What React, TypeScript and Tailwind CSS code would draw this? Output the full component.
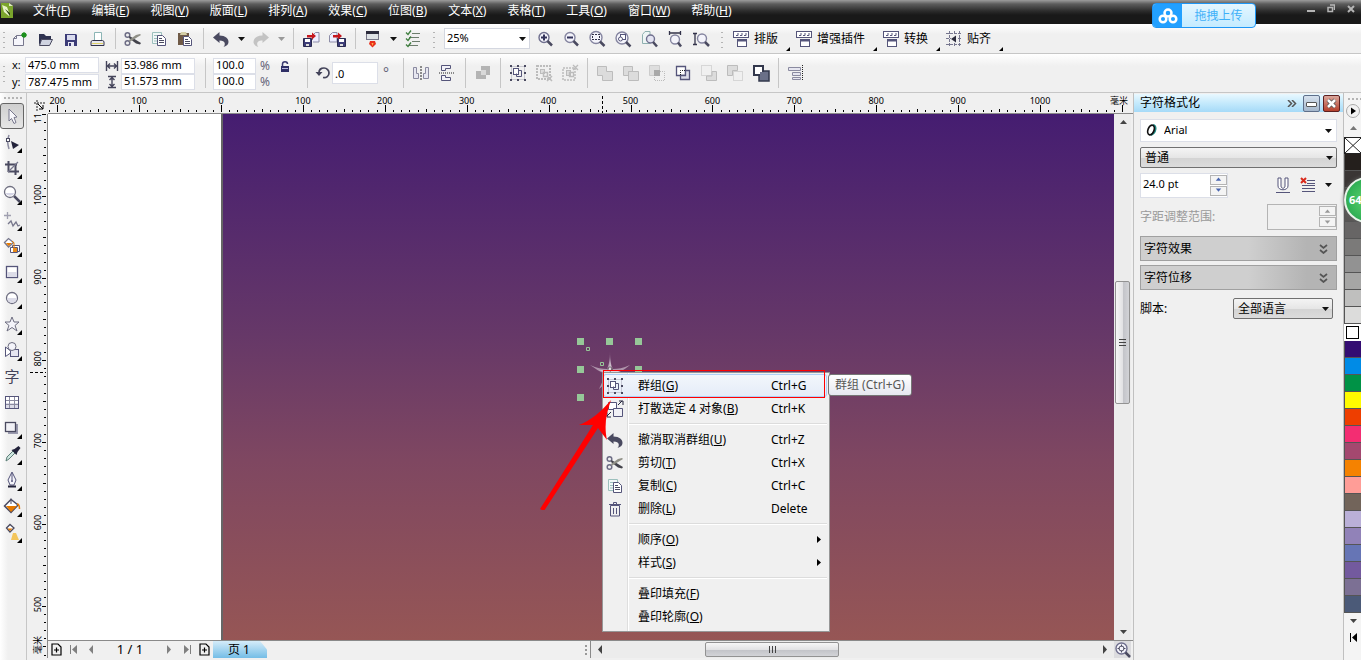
import { useState } from "react";
import type { ReactNode } from "react";

const INK = "#55557a";
const DARK = "#4a4a60";
const OFF = "#bcbcbc";

// every icon is drawn on an 18x18 grid
const ICONS: Record<string, ReactNode> = {
  create: (
    <>
      <path d="M3.5 8.5L6.5 5.5H13.5V15.5H3.5Z" fill="#f6f6fb" stroke="#77778c" />
      <path d="M3.5 8.5H6.5V5.5" fill="none" stroke="#77778c" />
      <circle cx="14" cy="5" r="2.500" fill="#1d8f1d" />
      <path d="M14 2v6M11 5h6M12 3l4 4M16 3l-4 4" stroke="#1d8f1d" strokeWidth="0.800" />
    </>
  ),
  open: (
    <>
      <path d="M3 15V4h5l2 2h5v4H6z" fill="#2f3350" />
      <path d="M5.5 9.5h11l-3 6h-10z" fill="#cfd3e0" stroke={DARK} />
    </>
  ),
  save: (
    <>
      <path d="M3 4h11l1 1v11H3z" fill="#3d3d78" />
      <rect x="5" y="5" width="8" height="5" fill="#d9dbee" />
      <rect x="6" y="12" width="6" height="4" fill="#e9e9f4" />
      <rect x="7" y="13" width="2" height="3" fill="#3d3d78" />
    </>
  ),
  print: (
    <>
      <path d="M6.500 10V2.500h7V10" fill="#fff" stroke="#8bb5b5" />
      <path d="M4.500 10.500h10l1.500 1v4h-13v-4z" fill="#e8e8ee" stroke="#33334a" />
      <path d="M4 13.500h11" stroke="#e0d36a" />
    </>
  ),
  cut: (
    <>
      <circle cx="3.500" cy="5" r="2.300" fill="none" stroke="#6d6d85" strokeWidth="1.500" />
      <circle cx="3.500" cy="13" r="2.300" fill="none" stroke="#6d6d85" strokeWidth="1.500" />
      <path d="M5.500 6L17 13l-1 1.500-4-1L5 8z" fill="#44444c" />
      <path d="M5.500 12L17 5l-1-1-4 1-7 5z" fill="#8f8f86" />
    </>
  ),
  copy: (
    <>
      <path d="M2.500 2.500h9v11h-9z" fill="#f2f7f7" stroke="#9cc0bd" />
      <path d="M4 5.500h5M4 8.500h4M4 11h4" stroke="#9cc0bd" />
      <path d="M7.500 5.500h5l3 3v7h-8z" fill="#fff" stroke={INK} />
      <path d="M9 8.500h3M9 10.500h5M9 12.500h5" stroke={DARK} />
    </>
  ),
  paste: (
    <>
      <rect x="2" y="3" width="11" height="12" fill="#6f5a47" />
      <path d="M4 5l1-3h5l1 3z" fill="#d5cfa8" />
      <path d="M7.500 6.500h5l3 3v6h-8z" fill="#fff" stroke={INK} />
      <path d="M9 9.500h3M9 11.500h5M9 13.500h5" stroke={DARK} />
    </>
  ),
  undo: <path d="M1 7.500L7.500 2v3.500c6 0 9 3 9 6.500 0 2-1.500 4-5 5 2-2 2.500-6.500-4-6.500V13z" fill={DARK} />,
  redo: <path d="M17 7.500L10.500 2v3.500c-6 0-9 3-9 6.500 0 2 1.500 4 5 5-2-2-2.500-6.500 4-6.500V13z" fill="#c3c3c3" />,
  importFile: (
    <>
      <path d="M10.500 10V5.500l3-3h3.500V12h-6" fill="#eef" stroke="#8d8da8" />
      <path d="M1.500 8.500h8v8h-8z" fill="#3d3d78" stroke="#2a2a50" />
      <rect x="3" y="9" width="5" height="3" fill="#fff" />
      <rect x="4" y="14" width="3" height="2" fill="#ddd" />
      <path d="M5 7.500V5h5V2.500L14 6l-4 3.500V7.500z" fill="#c5161d" />
    </>
  ),
  exportFile: (
    <>
      <path d="M1.500 12V5.500l3-3H9V12z" fill="#eef" stroke="#8d8da8" />
      <path d="M9.500 8.500h8v8h-8z" fill="#3d3d78" stroke="#2a2a50" />
      <rect x="11" y="9" width="5" height="3" fill="#fff" />
      <rect x="12" y="14" width="3" height="2" fill="#ddd" />
      <path d="M5 7.500V5h5V2.500L14 6l-4 3.500V7.500z" fill="#c5161d" />
    </>
  ),
  launch: (
    <>
      <rect x="2.500" y="1.500" width="12" height="8" fill="#dfe3e6" stroke="#777788" />
      <rect x="2" y="1" width="13" height="3" fill="#2c2c3c" />
      <path d="M6 11h5l1 3-3.500 3.500L5 14z" fill="#e8301c" />
      <path d="M7.500 13h2l-1 3z" fill="#ffb14a" />
    </>
  ),
  options: (
    <>
      <path d="M8 3.500h8M5 7.500h10M8 11.500h8M5 15.500h9" stroke="#6d7d6d" />
      <path d="M2 2.500l2 2 3-4M2 8.500l2 2 3-4M2 14.500l2 2 3-4" fill="none" stroke="#3f7f3f" strokeWidth="1.300" />
    </>
  ),
  zoomIn: (
    <>
      <circle cx="8" cy="7.500" r="5" fill="#f4f4fb" stroke="#6f6f8e" strokeWidth="1.400" />
      <path d="M5 7.500h6M8 4.500v6" stroke="#33335a" strokeWidth="2" />
      <path d="M11.500 11l4.500 4.500" stroke={DARK} strokeWidth="2.500" />
    </>
  ),
  zoomOut: (
    <>
      <circle cx="8" cy="7.500" r="5" fill="#f4f4fb" stroke="#8585a0" strokeWidth="1.400" />
      <path d="M5 7.500h6" stroke="#33335a" strokeWidth="2" />
      <path d="M11.500 11l4.500 4.500" stroke={DARK} strokeWidth="2.500" />
    </>
  ),
  zoomSelected: (
    <>
      <circle cx="8" cy="7.500" r="6" fill="#f4f4fb" stroke="#8585a0" strokeWidth="1.400" />
      <path d="M4 4h2v1H4zM7 4h2v1H7zM10 4h2v1h-2zM4 9h2v1H4zM7 9h2v1H7zM10 9h2v1h-2zM4 6h1v2H4zM11 6h1v2h-1z" fill="#33334a" />
      <path d="M12 11.500l4.500 4.500" stroke={DARK} strokeWidth="2.500" />
    </>
  ),
  zoomAll: (
    <>
      <circle cx="8" cy="8" r="6" fill="#f4f4fb" stroke="#8585a0" strokeWidth="1.400" />
      <rect x="6.500" y="4.500" width="5" height="5" fill="#fff" stroke={INK} />
      <circle cx="6.500" cy="9" r="2" fill="#fff" stroke={INK} />
      <path d="M12 12l4.500 4.500" stroke={DARK} strokeWidth="2.500" />
    </>
  ),
  navigator: (
    <>
      <circle cx="7.500" cy="7.500" r="5.500" fill="#f4f4fb" stroke="#6f6f8e" strokeWidth="1.400" />
      <circle cx="7.500" cy="7.500" r="2.500" fill="none" stroke={DARK} />
      <path d="M7.500 3.500v2M7.500 9.500v2M3.500 7.500h2M9.500 7.500h2" stroke={DARK} />
      <path d="M11.500 11.500l4.500 4.500" stroke={DARK} strokeWidth="2.500" />
    </>
  ),
  zoomPage: (
    <>
      <path d="M2.500 13.500V4.500l2.500-3h5v12z" fill="#eef5f5" stroke="#8fb0b0" />
      <circle cx="10.500" cy="9" r="4" fill="#e4e4f2" stroke="#6f6f8e" strokeWidth="1.400" />
      <path d="M13 12l4 4.500" stroke={DARK} strokeWidth="2.500" />
    </>
  ),
  zoomWidth: (
    <>
      <path d="M3.500 1v4M14.500 1v4M4 3h10" stroke="#33334a" strokeWidth="1.300" />
      <circle cx="9" cy="9.500" r="4.500" fill="#f4f4fb" stroke="#8585a0" strokeWidth="1.400" />
      <path d="M12 12.500l3 4" stroke={DARK} strokeWidth="2.500" />
    </>
  ),
  zoomHeight: (
    <>
      <path d="M1 3.500h4M1 14.500h4M3 4v10" stroke="#33334a" strokeWidth="1.300" />
      <circle cx="10" cy="8.500" r="4.500" fill="#f4f4fb" stroke="#8585a0" strokeWidth="1.400" />
      <path d="M13 12l4 4" stroke={DARK} strokeWidth="2.500" />
    </>
  ),
  plugin: (
    <>
      <rect x="1.500" y="1.500" width="15" height="6" fill="#fff" stroke={INK} />
      <path d="M4 5.500h2V3M8 5.500h2V3M12 5.500h2V3" fill="none" stroke={INK} />
      <rect x="5.500" y="9.500" width="9" height="7" fill="#fff" stroke={INK} />
      <path d="M5 10.500h10" stroke={INK} strokeWidth="2" />
    </>
  ),
  snap: (
    <>
      <path d="M4.500 1v16M9.500 1v16M14.500 1v16M1 3.500h16M1 8.500h16M1 14.500h16" stroke="#77778f" strokeDasharray="3 1" />
      <rect x="6" y="5" width="7" height="8" fill="#efefef" />
      <path d="M6 9l5-3.500v7z" fill="#2c2c3c" />
    </>
  ),
  widthMark: <path d="M3.500 4v10M14.500 4v10M4 9h10M7 6.500L4.500 9 7 11.500M11 6.500L13.500 9 11 11.500" fill="none" stroke="#44445a" strokeWidth="1.400" />,
  heightMark: <path d="M5 3.500h8M5 14.500h8M9 4v10M6.500 7L9 4.500 11.500 7M6.500 11L9 13.500 11.500 11" fill="none" stroke="#44445a" strokeWidth="1.400" />,
  lock: (
    <>
      <path d="M6.500 9V6c0-3 5-3 5 0" fill="none" stroke="#3a3a70" strokeWidth="1.500" />
      <rect x="5" y="8" width="8" height="6" fill="#2f2f66" />
      <path d="M6 10.500h6" stroke="#b8b8de" />
    </>
  ),
  rotate: (
    <>
      <path d="M5 8.500C5 5 8 4 10 4c3 0 5 2.500 5 5 0 3-2.500 5-6 4.500" fill="none" stroke="#44445a" strokeWidth="1.700" />
      <path d="M1.500 8h7L5 12z" fill="#44445a" />
    </>
  ),
  mirrorH: (
    <>
      <path d="M1.500 3.500h3v6h2v5h-5zM16.500 3.500h-3v6h-2v5h5z" fill="#e6e6f0" stroke="#8a8aa0" />
      <path d="M9 2v15" stroke="#222" strokeDasharray="2 1" />
    </>
  ),
  mirrorV: (
    <>
      <path d="M3.500 1.500h9v3h-5v2h-4zM3.500 16.500h9v-3h-5v-2h-4z" fill="#f2f2f8" stroke={INK} />
      <path d="M1 9h16" stroke="#222" strokeDasharray="1 1" />
    </>
  ),
  order: (
    <>
      <path d="M7 2h9v9h-4v4H2V7h5z" fill="#b4b4b4" />
      <rect x="7" y="6" width="5" height="5" fill="#d9d9d9" />
    </>
  ),
  group: (
    <>
      <rect x="2.500" y="2.500" width="13" height="13" fill="none" stroke="#a5a5b5" strokeDasharray="1 1" />
      <path d="M1 1h2v2H1zM8 1h2v2H8zM15 1h2v2h-2zM1 8h2v2H1zM15 8h2v2h-2zM1 15h2v2H1zM8 15h2v2H8zM15 15h2v2h-2z" fill={DARK} />
      <rect x="4.500" y="4.500" width="5" height="6" fill="#fff" stroke={INK} />
      <path d="M9.500 6.500h3v6h-5v-3" fill="none" stroke={INK} />
    </>
  ),
  ungroup: (
    <>
      <rect x="2" y="2" width="13" height="13" fill="none" stroke={OFF} strokeWidth="2" strokeDasharray="2 1" />
      <rect x="5.500" y="5.500" width="4" height="4" fill="#ddd" stroke={OFF} />
      <path d="M8.500 8.500h4v4h-4zM12 12l5 5M17 12l-5 5" fill="none" stroke={OFF} strokeWidth="1.500" />
    </>
  ),
  ungroupAll: (
    <>
      <rect x="2" y="4" width="12" height="12" fill="none" stroke={OFF} strokeWidth="1.500" strokeDasharray="2 1" />
      <rect x="5.500" y="6.500" width="4" height="5" fill="#ddd" stroke={OFF} />
      <path d="M8.500 8.500h4v4h-4zM12 1l5 5M17 1l-5 5" fill="none" stroke={OFF} strokeWidth="1.300" />
    </>
  ),
  weld: <path d="M1.500 2.500h9v5h6v9h-10v-5h-5z" fill="#dcdcdc" stroke={OFF} />,
  trim: (
    <>
      <path d="M1.500 2.500h9v5h-4v4h-5z" fill="#dcdcdc" stroke={OFF} />
      <path d="M6.500 7.500h10v9h-10z" fill="#dcdcdc" stroke={OFF} />
    </>
  ),
  intersect: (
    <>
      <path d="M1.500 1.500h10v10h-10z" fill="#dedede" stroke="#ccc" />
      <rect x="6" y="6" width="6" height="6" fill="#a9a9a9" />
      <path d="M12 7.500h4.500v9h-10V12" fill="none" stroke={OFF} strokeDasharray="1 1" />
    </>
  ),
  simplify: (
    <>
      <path d="M2.500 2.500h9v9h-9z" fill="#fff" stroke={INK} strokeWidth="1.300" />
      <path d="M11.500 6.500h4v9h-9v-4h5z" fill="#dcdce8" stroke={INK} strokeWidth="1.300" />
      <path d="M6.500 11v-4.500H11" fill="none" stroke="#222" strokeDasharray="1 1" />
    </>
  ),
  frontMinus: (
    <>
      <path d="M1.500 1.500h10v10h-10z" fill="none" stroke={OFF} strokeDasharray="1 1" />
      <path d="M12 7.500h4.500v9h-10v-4.500H12z" fill="#dcdcdc" stroke={OFF} />
    </>
  ),
  backMinus: (
    <>
      <path d="M1.500 1.500h10v5h-5v5h-5z" fill="#dcdcdc" stroke={OFF} />
      <path d="M7.500 7.500h9v9h-9z" fill="none" stroke={OFF} strokeDasharray="1 1" />
    </>
  ),
  boundary: (
    <>
      <path d="M8 7h9v10H7v-5z" fill="#6a7088" stroke="#33384c" strokeWidth="1.500" />
      <path d="M2 2h9v9H2z" fill="#fff" stroke="#33384c" strokeWidth="2" />
      <path d="M8 8h5v5H8z" fill="#6a7088" />
    </>
  ),
  align: (
    <>
      <path d="M15.500 1v16" stroke="#222" strokeDasharray="1 1" />
      <path d="M1.500 3.500h12v3h-12zM5.500 8.500h8v3h-8zM5.500 13.500h8v2h-8z" fill="#e6e6f0" stroke="#8a8aa0" />
    </>
  ),
  pick: <path d="M6 2l8 8-3 .5 2 5-2 1-2.500-5L6 14z" fill="#f7f7fb" stroke="#77778c" />,
  shape: (
    <>
      <path d="M6 2c-2 5-2 8 0 14" fill="none" stroke="#8b8ba0" strokeWidth="1.500" />
      <rect x="3.500" y="5.500" width="3" height="3" fill="#fff" stroke={DARK} />
      <path d="M8 8l8 4-6 4z" fill="#22223a" />
    </>
  ),
  crop: (
    <>
      <path d="M5.500 2v11M2 5.500h12M12.500 5v11M5 12.500h11" stroke={DARK} strokeWidth="2" />
      <path d="M5 13L15 3" stroke="#77778c" strokeWidth="1.300" />
    </>
  ),
  zoomTool: (
    <>
      <path d="M11 11l6 6" stroke={DARK} strokeWidth="2.500" />
      <circle cx="7" cy="7" r="5.500" fill="#fff" stroke="#6f6f80" strokeWidth="1.300" />
      <path d="M2.500 8h9a5 5 0 01-9 0z" fill="#d6d6e6" />
    </>
  ),
  freehand: (
    <>
      <path d="M4.500 1v7M1 4.500h7" stroke="#a0a0b0" strokeWidth="1.300" />
      <path d="M5 13l3-3 2 5 3-4 2 4 2-1" fill="none" stroke="#77778c" strokeWidth="1.300" />
    </>
  ),
  smartFill: (
    <>
      <path d="M1.500 5.500l4-4 5 4-5 4.500z" fill="#fff" stroke="#77778c" strokeWidth="1.300" />
      <path d="M3 6h6l-3.500 3z" fill="#e67a00" />
      <path d="M9.500 8.500h7v6h-7z" fill="#fff" stroke={INK} />
      <path d="M7.500 10.500h7v5h-7z" fill="#fff" stroke={INK} />
      <rect x="10" y="11" width="4" height="4" fill="#e88a1a" />
      <path d="M9 4l2 2v5" fill="none" stroke="#e67a00" />
    </>
  ),
  rect: (
    <>
      <rect x="3.500" y="3.500" width="11" height="11" fill="#fff" stroke={INK} strokeWidth="1.300" />
      <rect x="4" y="9" width="10" height="5" fill="#dcdce8" />
    </>
  ),
  ellipse: (
    <>
      <circle cx="9" cy="9" r="5.500" fill="#fff" stroke="#6d6d80" strokeWidth="1.300" />
      <path d="M4 9h10a5 5 0 01-10 0z" fill="#dcdce8" />
    </>
  ),
  star: <path d="M9 2l2 5h5l-4 3.500 2 5.500-5-3.500L4 16l2-5.500L2 7h5z" fill="#f4f4fa" stroke="#6d6d80" />,
  shapes: (
    <>
      <path d="M2.500 6v9.500L9 11z" fill="#fff" stroke={INK} />
      <rect x="7.500" y="8.500" width="8" height="7" fill="#e6e6f0" stroke={INK} />
      <circle cx="9" cy="5.500" r="4" fill="#f4f4fa" stroke="#6d6d80" />
    </>
  ),
  table: (
    <>
      <rect x="2.500" y="3.500" width="13" height="12" fill="#fff" stroke={INK} />
      <path d="M3 10h12v5H3z" fill="#dcdce8" />
      <path d="M6.500 4v11M11.500 4v11M3 7.500h12M3 11.500h12" stroke="#8b8ba0" />
    </>
  ),
  shadow: (
    <>
      <rect x="5" y="5" width="10" height="10" fill="#9a9aae" />
      <rect x="2.500" y="3.500" width="10" height="9" fill="#f1f1f6" stroke={DARK} strokeWidth="1.300" />
    </>
  ),
  dropper: (
    <>
      <path d="M3 16l1-4 6-6 2 2-6 6z" fill="#cfe6e0" stroke="#5d7f78" />
      <path d="M8.500 5l5 5 1-3 3-4-2-2-4 3z" fill="#22223a" />
    </>
  ),
  pen: (
    <>
      <path d="M9 1l4 8-2 5H7L5 9z" fill="#f4f4fa" stroke={INK} />
      <path d="M9 2v7" stroke={INK} />
      <circle cx="9" cy="10" r="1" fill={INK} />
      <path d="M5 15.500h8" stroke="#22223a" strokeWidth="2" />
    </>
  ),
  fill: (
    <>
      <path d="M1.500 9L8 2.500l7 5.500-7 7.500z" fill="#fff" stroke={DARK} strokeWidth="1.500" />
      <path d="M3 9h11l-6 6z" fill="#e67a00" />
      <path d="M14 7c2 0 2.500 2 2.500 5" fill="none" stroke="#e67a00" strokeWidth="1.500" />
      <path d="M8 7V1.500" stroke={DARK} />
    </>
  ),
  meshFill: (
    <>
      <path d="M3.500 5L7 1.500 11 5 7 9z" fill="#fff" stroke={DARK} strokeWidth="1.300" />
      <path d="M4.500 5.500h5L7 8z" fill="#e67a00" />
      <path d="M10 10h3l3 7H8z" fill="#f3c55c" />
    </>
  ),
  breakApart: (
    <>
      <path d="M2.500 2.500h8v7h-8z" fill="#fff" stroke={INK} />
      <path d="M7.500 8.500h9v8h-9z" fill="#f1f1f6" stroke={INK} />
      <path d="M12 5l4-4M13 1h4v4M5 12l-4 4M1 12.500V17h4" fill="none" stroke="#22223a" />
    </>
  ),
  trash: (
    <>
      <path d="M3 4.500h12M7.500 4V2.500h3V4" fill="none" stroke={INK} />
      <path d="M4.500 5.500h9v10.500h-9zM7.500 8v6M10.500 8v6" fill="none" stroke={INK} />
    </>
  ),
};

function Icon({ name }: { name: string }) {
  return (
    <svg className="h-[18px] w-[18px] shrink-0" viewBox="0 0 18 18" aria-hidden="true">
      {ICONS[name]}
    </svg>
  );
}

function Tool({ name, disabled }: { name: string; disabled?: boolean }) {
  return (
    <button type="button" aria-label={name} disabled={disabled} className="flex h-6 w-[26px] shrink-0 items-center justify-center">
      <Icon name={name} />
    </button>
  );
}

function Sep({ narrow }: { narrow?: boolean }) {
  return (
    <div className={`flex h-full shrink-0 justify-center py-1 ${narrow ? "w-[9px]" : "w-[10px]"}`}>
      <div className="w-px bg-[#c6c6c6]" />
    </div>
  );
}

function Grip() {
  return <div className="h-[18px] w-2 shrink-0 bg-[radial-gradient(circle,#b4b4b4_1px,transparent_1px)] bg-[size:8px_5px]" />;
}

function Caret({ color = "#111" }: { color?: string }) {
  return (
    <svg className="h-1 w-[7px]" viewBox="0 0 7 4" aria-hidden="true">
      <path d="M0 0h7L3.500 4z" fill={color} />
    </svg>
  );
}

function CaretButton({ color, label }: { color?: string; label: string }) {
  return (
    <button type="button" aria-label={label} className="flex h-6 w-[14px] shrink-0 items-center justify-center">
      <Caret color={color} />
    </button>
  );
}

function Corner() {
  return (
    <svg className="absolute right-0 bottom-0 h-[4px] w-[4px]" viewBox="0 0 4 4" aria-hidden="true">
      <path d="M4 0v4H0z" fill="#000" />
    </svg>
  );
}

const MENUS = [
  ["文件", "F"], ["编辑", "E"], ["视图", "V"], ["版面", "L"], ["排列", "A"], ["效果", "C"],
  ["位图", "B"], ["文本", "X"], ["表格", "T"], ["工具", "O"], ["窗口", "W"], ["帮助", "H"],
];

function MenuBar() {
  return (
    <header className="flex h-6 shrink-0 items-start bg-[linear-gradient(#9c9c9c,#5c5c5c_4px,#2c2c2c_11px,#191919_15px)] text-white">
      <svg className="mt-[3px] h-4 w-[13px]" viewBox="0 0 13 16" aria-hidden="true">
        <path d="M1 0h8l4 3v12H1z" fill="#7ba52c" />
        <path d="M2 2l5 2 3 8-1 1-5-4z" fill="#e8f3c8" />
        <path d="M5 6l5 4v3z" fill="#27400a" />
        <path d="M9 0l4 3H9z" fill="#dfe9c4" />
      </svg>
      <nav className="flex gap-[21px] pl-5">
        {MENUS.map(([label, key]) => (
          <button type="button" key={key} className="h-[22px] text-xs whitespace-nowrap">
            {label}(<u>{key}</u>)
          </button>
        ))}
      </nav>
      <div className="ml-auto flex gap-3 pt-1 pr-[6px] text-[#b5b5b5]">
        <button type="button" aria-label="minimize">
          <svg className="h-[10px] w-2" viewBox="0 0 8 10"><path d="M0 6h8v2H0z" fill="currentColor" /></svg>
        </button>
        <button type="button" aria-label="restore">
          <svg className="h-[10px] w-2" viewBox="0 0 8 10"><path d="M1 3.500h4.500v4H1zM3 1h4.500v5" fill="none" stroke="currentColor" strokeWidth="1.500" /></svg>
        </button>
        <button type="button" aria-label="close">
          <svg className="h-[10px] w-2" viewBox="0 0 8 10"><path d="M1 2l6 6M7 2L1 8" stroke="currentColor" strokeWidth="2" /></svg>
        </button>
      </div>
    </header>
  );
}

function StandardBar() {
  return (
    <div className="flex h-[30px] shrink-0 items-center border-b border-[#c6c6c6] bg-[linear-gradient(#fff,#f0f0f0_10px)]">
      <div className="mr-[-2px]"><Grip /></div>
      <Tool name="create" />
      <Tool name="open" />
      <Tool name="save" />
      <Tool name="print" />
      <Sep />
      <Tool name="cut" />
      <Tool name="copy" />
      <Tool name="paste" />
      <Sep />
      <Tool name="undo" />
      <CaretButton label="undo list" />
      <Tool name="redo" disabled />
      <CaretButton label="redo list" color="#999" />
      <Sep />
      <Tool name="importFile" />
      <Tool name="exportFile" />
      <Sep />
      <Tool name="launch" />
      <CaretButton label="launcher list" />
      <Tool name="options" />
      <div className="px-1"><Grip /></div>
      <div className="relative mx-[2px]">
        <select aria-label="zoom level" className="block h-[21px] w-[86px] appearance-none border border-[#d4d7e0] bg-white pl-[2px] text-[11px]">
          <option>25%</option>
        </select>
        <span className="pointer-events-none absolute top-0 right-1 flex h-[21px] items-center"><Caret /></span>
      </div>
      <Tool name="zoomIn" />
      <Tool name="zoomOut" />
      <Tool name="zoomSelected" />
      <Tool name="zoomAll" />
      <Tool name="zoomPage" />
      <Tool name="zoomWidth" />
      <Tool name="zoomHeight" />
      <div className="px-1"><Grip /></div>
      <div className="flex gap-[3px]">
        {["排版", "增强插件", "转换", "贴齐"].map((label) => (
          <button type="button" key={label} className="relative flex h-6 items-center gap-1 pr-3 pl-[2px] text-xs whitespace-nowrap">
            <Icon name={label === "贴齐" ? "snap" : "plugin"} />
            {label}
            <Corner />
          </button>
        ))}
      </div>
    </div>
  );
}

const FIELD = "block border border-[#dcdfe8] bg-white pl-[2px] text-[11px] outline-none";

function PropertyBar() {
  return (
    <div className="flex h-[39px] shrink-0 items-center border-b border-[#c6c6c6] bg-[linear-gradient(#fff,#f0f0f0_12px)] text-[11px]">
      <Grip />
      <div className="flex w-[91px] flex-col pt-px pl-1">
        <label className="flex items-center">
          <span className="w-[13px]">x:</span>
          <input className={`${FIELD} h-4 w-[74px]`} defaultValue="475.0 mm" />
        </label>
        <label className="flex items-center">
          <span className="w-[13px]">y:</span>
          <input className={`${FIELD} h-4 w-[74px]`} defaultValue="787.475 mm" />
        </label>
      </div>
      <div className="flex w-[101px] flex-col pt-px pl-1">
        <label className="flex h-4 items-center">
          <Icon name="widthMark" />
          <input aria-label="width" className={`${FIELD} h-4 w-[74px]`} defaultValue="53.986 mm" />
        </label>
        <label className="flex h-4 items-center">
          <Icon name="heightMark" />
          <input aria-label="height" className={`${FIELD} h-4 w-[74px]`} defaultValue="51.573 mm" />
        </label>
      </div>
      <Sep />
      <div className="flex w-[66px] flex-col pt-px pl-[3px] text-[#66667a]">
        <label className="flex h-4 items-center gap-1">
          <input aria-label="scale x" className={`${FIELD} h-4 w-[43px] text-black`} defaultValue="100.0" />
          <span className="text-xs">%</span>
        </label>
        <label className="flex h-4 items-center gap-1">
          <input aria-label="scale y" className={`${FIELD} h-4 w-[43px] text-black`} defaultValue="100.0" />
          <span className="text-xs">%</span>
        </label>
      </div>
      <div className="w-[26px] self-start pt-1"><Icon name="lock" /></div>
      <Sep />
      <label className="flex w-[86px] items-center pl-[2px]">
        <Icon name="rotate" />
        <input aria-label="rotation" className={`${FIELD} h-[22px] w-[46px]`} defaultValue=".0" />
        <span className="pl-[5px] text-sm text-[#66667a]">°</span>
      </label>
      <Sep />
      <Tool name="mirrorH" />
      <Tool name="mirrorV" />
      <Sep />
      <Tool name="order" disabled />
      <Sep narrow />
      <Tool name="group" />
      <Tool name="ungroup" disabled />
      <Tool name="ungroupAll" disabled />
      <Sep narrow />
      <Tool name="weld" disabled />
      <Tool name="trim" disabled />
      <Tool name="intersect" disabled />
      <Tool name="simplify" />
      <Tool name="frontMinus" disabled />
      <Tool name="backMinus" disabled />
      <Tool name="boundary" />
      <Sep narrow />
      <Tool name="align" />
    </div>
  );
}

const TOOLS = [
  "pick", "shape", "crop", "zoomTool", "freehand", "smartFill", "rect", "ellipse", "star",
  "shapes", "text", "table", "shadow", "dropper", "pen", "fill", "meshFill",
];

function Toolbox() {
  return (
    <aside className="flex w-[27px] shrink-0 flex-col border-r border-[#c6c6c6] bg-[linear-gradient(90deg,#fff,#f0f0f0_8px)]">
      <div className="mx-[3px] h-[10px] bg-[radial-gradient(circle,#b4b4b4_1px,transparent_1px)] bg-[size:4px_10px]" />
      {TOOLS.map((name) => (
        <button
          type="button"
          key={name}
          aria-label={name}
          className={`relative flex h-[26px] shrink-0 items-center ${name === "pick" ? "mr-[2px] rounded-[3px] border border-[#666] bg-[linear-gradient(#cfcfcf,#e6e6e6)] pl-[2px]" : "pl-[3px]"}`}
        >
          {name === "text" ? <span className="w-[18px] text-center text-[15px] leading-none text-[#44445a]">字</span> : <Icon name={name} />}
          {!["pick", "text", "table"].includes(name) && (
            <svg className="absolute right-1 bottom-[2px] h-[5px] w-[5px]" viewBox="0 0 5 5"><path d="M5 0v5H0z" /></svg>
          )}
        </button>
      ))}
    </aside>
  );
}

const MM = 0.819;

function HorizontalRuler() {
  const ticks = Array.from({ length: 132 }, (_, i) => -210 + i * 10);
  return (
    <svg className="block h-[21px] w-full border-b border-[#8a8a8a] text-[9px]" shapeRendering="crispEdges">
      {ticks.map((v) => (
        <rect key={v} x={Math.round(173 + v * MM)} y={v % 100 === 0 ? 12 : v % 50 === 0 ? 16 : 17} width="1" height={v % 100 === 0 ? 7 : v % 50 === 0 ? 3 : 2} />
      ))}
      {ticks.filter((v) => v % 100 === 0 && v < 1100).map((v) => (
        <text key={v} x={173 + v * MM} y="11" textAnchor="middle">{Math.abs(v)}</text>
      ))}
      <text x="1071" y="11" textAnchor="middle">毫米</text>
      <path d="M554.500 3v17" stroke="#000" strokeDasharray="3 2" />
    </svg>
  );
}

function VerticalRuler() {
  const ticks = Array.from({ length: 67 }, (_, i) => 1100 - i * 10);
  return (
    <svg className="block min-h-0 w-full flex-1 border-r border-[#8a8a8a] text-[9px]" shapeRendering="crispEdges">
      {ticks.map((v) => (
        <rect key={v} x={v % 100 === 0 ? 15 : v % 50 === 0 ? 16 : 17} y={Math.round(82 + (1000 - v) * MM)} width={v % 100 === 0 ? 4 : v % 50 === 0 ? 3 : 2} height="1" />
      ))}
      {[1100, 1000, 900, 800, 700, 600, 500].map((v) => {
        const y = 81 + (1000 - v) * MM;
        return <text key={v} x="14" y={y} textAnchor="middle" transform={`rotate(-90 14 ${y})`}>{v}</text>;
      })}
      <text x="14" y="531" textAnchor="middle" transform="rotate(-90 14 531)">毫米</text>
      <path d="M3 258.500h16" stroke="#000" strokeDasharray="3 2" />
    </svg>
  );
}

type MenuItem = { icon?: string; label: string; hotkey: string; shortcut?: string; sub?: boolean };

const CONTEXT_MENU: MenuItem[][] = [
  [
    { icon: "group", label: "群组", hotkey: "G", shortcut: "Ctrl+G" },
    { icon: "breakApart", label: "打散选定 4 对象", hotkey: "B", shortcut: "Ctrl+K" },
  ],
  [
    { icon: "undo", label: "撤消取消群组", hotkey: "U", shortcut: "Ctrl+Z" },
    { icon: "cut", label: "剪切", hotkey: "T", shortcut: "Ctrl+X" },
    { icon: "copy", label: "复制", hotkey: "C", shortcut: "Ctrl+C" },
    { icon: "trash", label: "删除", hotkey: "L", shortcut: "Delete" },
  ],
  [
    { label: "顺序", hotkey: "O", sub: true },
    { label: "样式", hotkey: "S", sub: true },
  ],
  [
    { label: "叠印填充", hotkey: "F" },
    { label: "叠印轮廓", hotkey: "O" },
  ],
];

function ContextMenu() {
  const [active, setActive] = useState("群组");
  return (
    <div className="absolute top-[258px] left-[554px] w-[228px] border border-[#979797] bg-[linear-gradient(90deg,#f0f0f0_24px,#dedede_24px,#dedede_25px,#fff_25px,#fff_26px,#f0f0f0_26px)] pt-px pr-[2px] pb-[3px] text-xs">
      {CONTEXT_MENU.map((section, i) => (
        <div key={i}>
          {i > 0 && <div className="ml-[26px] flex h-2 items-center"><div className="h-[2px] w-full border-t border-[#dcdcdc] bg-white" /></div>}
          {section.map((item) => (
            <button
              type="button"
              key={item.label}
              onMouseEnter={() => setActive(item.label)}
              className={`flex h-[23px] w-full items-center rounded-[3px] text-left whitespace-nowrap ${item.label === active ? "bg-[linear-gradient(#f3f6fb,#e4ecf8)] shadow-[inset_0_0_0_1px_#aecff7]" : ""}`}
            >
              <span className="flex w-[35px] shrink-0 pl-[3px]">{item.icon && <Icon name={item.icon} />}</span>
              <span className="flex-1">{item.label}(<u>{item.hotkey}</u>)</span>
              {item.shortcut && <span className="w-14">{item.shortcut}</span>}
              {item.sub && (
                <svg className="mr-[6px] h-[7px] w-1" viewBox="0 0 4 7"><path d="M0 0l4 3.500L0 7z" /></svg>
              )}
            </button>
          ))}
        </div>
      ))}
    </div>
  );
}

function Drawing() {
  return (
    <div className="relative min-w-0 flex-1 overflow-hidden bg-white pl-[173px]">
      <div className="h-full border-l-2 border-[#666] bg-[linear-gradient(#451d71,#663868_42%,#7f4761_66%,#965655)]" />
      <svg className="absolute top-[220px] left-[525px] h-[75px] w-[75px]" viewBox="0 0 75 75" aria-hidden="true">
        <path d="M37 17c0 10 1 14 3 18 5 0 10-1 17-4-6 5-10 7-14 8 1 7 4 13 7 18-6-5-9-9-12-13-4 4-7 7-12 11 3-6 5-10 5-16-4-1-8-4-14-8 7 3 12 4 17 4 2-5 3-9 3-18z" fill="#fff" opacity="0.450" />
        <path d="M37 22c0 8 1 11 2 15l8 0-7 3-3 4-2-4-9-4 9 1c2-5 2-8 2-15z" fill="#fff" opacity="0.600" />
        <path d="M4 4h7v7H4zM33 4h7v7h-7zM62 4h7v7h-7zM4 32h7v7H4zM62 32h7v7h-7zM4 60h7v7H4z" fill="#96c798" />
        <path d="M13.500 13.500h3v3h-3zM27.500 28.500h3v3h-3z" fill="none" stroke="#96c798" />
        <circle cx="37" cy="35" r="2" fill="none" stroke="#111" strokeDasharray="1 1" />
      </svg>
      <ContextMenu />
      <div role="tooltip" className="absolute top-[260px] left-[780px] flex h-[22px] items-center rounded-[3px] border border-[#767676] bg-[linear-gradient(#fff,#e6e7f0)] px-[6px] text-xs whitespace-nowrap text-[#575757]">
        群组 (Ctrl+G)
      </div>
      <div className="pointer-events-none absolute top-[256px] left-[555px] h-7 w-[222px] border border-[#f00]" />
      <svg className="pointer-events-none absolute top-[284px] left-[490px] h-28 w-20" viewBox="0 0 80 112" aria-hidden="true">
        <path d="M2 111L55 27l-14 0C52 23 64 13 73 2c-5 14-7 26-4 40l-9-12L6 113z" fill="#f00" />
      </svg>
    </div>
  );
}

const TRIANGLES: Record<string, string> = {
  up: "M1 6L4.500 2 8 6z",
  down: "M1 2h7L4.500 6z",
  left: "M6 0v9L2 4.500z",
  right: "M2 0v9l4-4.500z",
  first: "M1 0h1v9H1zM8 0v9L3 4.500z",
  last: "M7 0h1v9H7zM1 0v9l5-4.500z",
};

function Arrow({ dir, color = "#444", label }: { dir: string; color?: string; label: string }) {
  return (
    <button type="button" aria-label={label} className="flex h-4 w-[18px] shrink-0 items-center justify-center">
      <svg className="h-[9px] w-[9px]" viewBox="0 0 9 9"><path d={TRIANGLES[dir]} fill={color} /></svg>
    </button>
  );
}

function AddPage({ label }: { label: string }) {
  return (
    <button type="button" aria-label={label} className="flex h-4 w-4 shrink-0 items-center justify-center">
      <svg className="h-[13px] w-[11px]" viewBox="0 0 11 13"><path d="M1 1h6l3 3v8H1zM5.500 4.500v5M3 7h5" fill="none" stroke="#000" strokeWidth="1.200" /></svg>
    </button>
  );
}

function PageBar() {
  return (
    <div className="flex h-[18px] shrink-0 items-stretch border-t border-[#8a8a8a] bg-[#f0f0f0]">
      <div className="flex w-[537px] shrink-0 items-center">
        <AddPage label="add page before" />
        <Arrow dir="first" color="#808080" label="first page" />
        <Arrow dir="left" color="#808080" label="previous page" />
        <span className="w-[60px] text-center text-[13px]">1 / 1</span>
        <Arrow dir="right" color="#808080" label="next page" />
        <Arrow dir="last" color="#808080" label="last page" />
        <AddPage label="add page after" />
        <button type="button" className="ml-px h-full w-[54px] bg-[linear-gradient(#d5ecf9,#74bde6)] pr-[2px] text-center text-xs leading-4 [clip-path:polygon(0_0,47px_0,100%_50%,100%_100%,0_100%)]">
          页 1
        </button>
      </div>
      <div className="flex w-[6px] items-center border-r border-[#8a8a8a]"><div className="h-3 w-[2px] bg-[radial-gradient(circle,#999_1px,transparent_1px)] bg-[size:2px_4px]" /></div>
      <div className="flex min-w-0 flex-1 items-center bg-[#ececec]">
        <Arrow dir="left" label="scroll left" />
        <div className="flex flex-1 pl-24">
          <div className="flex h-[15px] w-[134px] items-center justify-center gap-[2px] rounded-[2px] border border-[#929292] bg-[linear-gradient(#f6f6f6,#e2e2e4_50%,#c3c4c9_55%,#d2d3d7)]">
            <i className="h-[7px] w-px bg-[#444]" />
            <i className="h-[7px] w-px bg-[#444]" />
            <i className="h-[7px] w-px bg-[#444]" />
          </div>
        </div>
        <Arrow dir="right" label="scroll right" />
      </div>
      <div className="w-[19px]">
        <button type="button" aria-label="navigator" className="flex h-[17px] w-[17px] items-center justify-center bg-[#dcdcdf]"><Icon name="navigator" /></button>
      </div>
    </div>
  );
}

function Workspace() {
  return (
    <main className="flex min-w-0 flex-1 pb-[2px]">
      <div className="flex w-[21px] shrink-0 flex-col">
        <svg className="h-[21px] w-full" viewBox="0 0 21 21">
          <path d="M7 10h11M10 7v11" stroke="#222" strokeDasharray="2 1" />
          <path d="M11 11l5 5M16 12v4h-4" fill="none" stroke="#000" />
        </svg>
        <VerticalRuler />
      </div>
      <div className="flex min-w-0 flex-1 flex-col">
        <HorizontalRuler />
        <div className="flex min-h-0 flex-1">
          <Drawing />
          <div className="flex w-[19px] shrink-0 flex-col bg-[linear-gradient(90deg,#ececec_17px,#f0f0f0_17px)]">
            <Arrow dir="up" label="scroll up" />
            <div className="mt-[151px] ml-px flex h-[123px] w-[15px] flex-col items-center justify-center gap-[2px] rounded-[2px] border border-[#929292] bg-[linear-gradient(90deg,#f6f6f6,#e2e2e4_50%,#c3c4c9_55%,#d2d3d7)]">
              <i className="h-px w-[7px] bg-[#444]" />
              <i className="h-px w-[7px] bg-[#444]" />
              <i className="h-px w-[7px] bg-[#444]" />
            </div>
            <div className="mt-auto"><Arrow dir="down" label="scroll down" /></div>
          </div>
        </div>
        <PageBar />
      </div>
    </main>
  );
}

function Spinner({ color }: { color: string }) {
  return (
    <span className="absolute top-[2px] right-[1px] flex flex-col gap-[1px]">
      {["up", "down"].map((dir) => (
        <button type="button" key={dir} aria-label={dir} className="flex h-[10px] w-[17px] items-center justify-center border border-[#b4b4b4] bg-[#f4f4f4]">
          <svg className="h-[7px] w-[7px]" viewBox="0 0 9 9"><path d={TRIANGLES[dir]} fill={color} /></svg>
        </button>
      ))}
    </span>
  );
}

function Docker() {
  return (
    <section className="flex w-[211px] shrink-0 flex-col border-x border-[#c0c0c0] text-xs">
      <div className="mt-px flex h-[18px] items-center bg-[linear-gradient(#e9f8ff,#c5eafc_50%,#a5daf8)] pr-[3px] pl-[6px]">
        <h2 className="flex-1">字符格式化</h2>
        <button type="button" aria-label="collapse" className="mr-[6px]">
          <svg className="h-[7px] w-[10px]" viewBox="0 0 10 7"><path d="M1 0l3.500 3.500L1 7M5 0l3.500 3.500L5 7" fill="none" stroke="#555" strokeWidth="1.500" /></svg>
        </button>
        <button type="button" aria-label="roll up" className="mr-[3px] flex h-[17px] w-[17px] items-center justify-center rounded-[2px] border border-[#5f6f8a] bg-[linear-gradient(#d7e2ee,#a5b7cc)]">
          <span className="mt-[3px] h-[5px] w-[11px] rounded-[1px] border border-[#555] bg-white" />
        </button>
        <button type="button" aria-label="close docker" className="flex h-[17px] w-[17px] items-center justify-center rounded-[2px] border border-[#5d2020] bg-[linear-gradient(#dba79c,#b5402c)]">
          <svg className="h-[11px] w-[11px]" viewBox="0 0 11 11">
            <path d="M2 2l7 7M9 2L2 9" stroke="#555" strokeWidth="4" />
            <path d="M2 2l7 7M9 2L2 9" stroke="#fff" strokeWidth="2.500" />
          </svg>
        </button>
      </div>
      <div className="flex flex-col px-[6px] pt-[7px]">
        <div className="relative">
          <svg className="absolute top-[5px] left-[5px] h-3 w-3" viewBox="0 0 12 12" aria-hidden="true">
            <path d="M8 1c4 1 3 8-2 10" fill="none" stroke="#1d8a84" strokeWidth="2" />
            <ellipse cx="6" cy="6" rx="3" ry="5" transform="rotate(20 6 6)" fill="none" stroke="#111" strokeWidth="1.700" />
          </svg>
          <select aria-label="font" className="block h-[23px] w-full appearance-none border border-[#dcdfe8] bg-white pl-[23px] text-[11px]">
            <option>Arial</option>
          </select>
          <span className="pointer-events-none absolute top-0 right-[5px] flex h-[23px] items-center"><Caret /></span>
        </div>
        <div className="relative mt-[5px]">
          <select aria-label="style" className="block h-[21px] w-full appearance-none rounded-[2px] border border-[#707070] bg-[linear-gradient(#f4f4f4,#e6e6e6_50%,#d4d4d4_55%,#dcdcdc)] pl-1">
            <option>普通</option>
          </select>
          <span className="pointer-events-none absolute top-0 right-1 flex h-[21px] items-center"><Caret /></span>
        </div>
        <div className="mt-1 flex h-[26px] items-center">
          <div className="relative">
            <input aria-label="size" className="block h-[25px] w-[88px] border border-[#dcdfe8] bg-white pb-1 pl-[2px] text-[11px]" defaultValue="24.0 pt" />
            <Spinner color="#4a66b0" />
          </div>
          <button type="button" aria-label="underline" className="ml-auto">
            <svg className="h-4 w-[15px]" viewBox="0 0 15 16"><path d="M3 1h3v8c0 3 4 3 4 0V1h3v8c0 5-10 5-10 0zM1 15.500h14" fill="#fff" stroke={INK} /></svg>
          </button>
          <button type="button" aria-label="alignment" className="ml-[10px]">
            <svg className="h-4 w-4" viewBox="0 0 16 16"><path d="M7 3.500h8M7 6.500h8M2 8.500h13M2 11.500h13M2 14.500h13" stroke={INK} /><path d="M1 1l5 5M6 1L1 6" stroke="#d92a1c" strokeWidth="2" /></svg>
          </button>
          <span className="ml-[9px] flex w-[12px]"><Caret /></span>
        </div>
        <label className="mt-[6px] flex h-[26px] items-center justify-between text-[#9a9a9a]">
          字距调整范围:
          <span className="relative">
            <input aria-label="kerning" disabled className="block h-[26px] w-[70px] border border-[#b4b4b4] bg-[#f0f0f0]" />
            <Spinner color="#999" />
          </span>
        </label>
        <div className="mt-[6px] flex flex-col gap-1">
          {["字符效果", "字符位移"].map((title) => (
            <button type="button" key={title} className="flex h-[25px] items-center justify-between border border-[#a0a0a0] bg-[linear-gradient(90deg,#cfcfcf_55%,#b4b4b4_85%)] pr-2 pl-[3px]">
              {title}
              <svg className="h-[10px] w-[9px]" viewBox="0 0 9 10"><path d="M1 1l3.500 3L8 1M1 6l3.500 3L8 6" fill="none" stroke="#555" strokeWidth="1.700" /></svg>
            </button>
          ))}
        </div>
        <label className="mt-2 flex items-center justify-between pr-1">
          脚本:
          <span className="relative">
            <select className="block h-[21px] w-[100px] appearance-none rounded-[2px] border border-[#707070] bg-[linear-gradient(#f4f4f4,#e6e6e6_50%,#d4d4d4_55%,#dcdcdc)] pl-1">
              <option>全部语言</option>
            </select>
            <span className="pointer-events-none absolute top-0 right-1 flex h-[21px] items-center"><Caret /></span>
          </span>
        </label>
      </div>
    </section>
  );
}

const SWATCHES = [
  "#241f1c", "#3a3635", "#4a4746", "#595655", "#676565", "#7b7a79", "#929292", "#a6a6a5", "#bfbfbe", "#dcdcdb",
  "#ffffff",
  "#340d72", "#008be6", "#009246", "#fffb00", "#ee3e00", "#f32d72", "#a4486f", "#f58200",
  "#ff9d97", "#72645a", "#bab0d8", "#9182b8", "#6675b5", "#735a9e", "#7c7094", "#4b5a78",
];

function Palette() {
  return (
    <aside className="relative flex w-[17px] shrink-0 flex-col overflow-hidden bg-[#f4f4f4]">
      <div className="mt-1 mb-[2px] ml-[3px] h-1 bg-[radial-gradient(circle,#b4b4b4_1px,transparent_1px)] bg-[size:4px_4px]" />
      <svg className="h-[17px] w-[17px]" viewBox="0 0 17 17" aria-hidden="true">
        <circle cx="9" cy="8" r="6.500" fill="#f2f2f2" stroke="#aaa" />
        <path d="M7 4.500v7l5-3.500z" />
      </svg>
      <Arrow dir="up" color="#777" label="palette up" />
      <svg className="mt-px h-[17px] w-[17px] shrink-0" viewBox="0 0 17 17" aria-hidden="true">
        <rect x="0.500" y="0.500" width="17" height="16" fill="#fff" stroke="#222" />
        <path d="M1 1l16 15M17 1L1 16" stroke="#222" />
      </svg>
      {SWATCHES.map((color) => (
        <button
          type="button"
          key={color}
          aria-label={color}
          className={color === "#ffffff" ? "h-[17px] shrink-0 border border-white bg-white p-px" : "h-[17px] shrink-0 border-b border-l border-[#555]"}
          style={{ backgroundColor: color }}
        >
          {color === "#ffffff" && <span className="block h-[13px] w-[13px] border border-black" />}
        </button>
      ))}
      <Arrow dir="down" label="palette down" />
      <Arrow dir="first" color="#000" label="expand palette" />
    </aside>
  );
}

export default function App() {
  return (
    <div className="relative flex h-screen flex-col overflow-hidden bg-[#f0f0f0] font-['Noto_Sans','Noto_Sans_CJK_SC',sans-serif] text-black">
      <MenuBar />
      <StandardBar />
      <PropertyBar />
      <div className="flex min-h-0 flex-1">
        <Toolbox />
        <Workspace />
        <Docker />
        <Palette />
      </div>
      <button type="button" className="absolute top-[3px] right-[105px] flex h-[25px] w-[104px] items-center overflow-hidden rounded-[4px] border border-[#1e96f5] bg-[linear-gradient(#e4f6ff,#c4ebff)] text-xs text-[#3fb0f8]">
        <span className="flex h-full w-[29px] items-center justify-center bg-[#22a0ff]">
          <svg className="h-4 w-5" viewBox="0 0 20 16" aria-hidden="true">
            <g fill="none" stroke="#fff" strokeWidth="2.500">
              <circle cx="10" cy="5" r="3.500" />
              <circle cx="5" cy="11" r="3.300" />
              <circle cx="15" cy="11" r="3.300" />
            </g>
          </svg>
        </span>
        <span className="flex-1 text-center">拖拽上传</span>
      </button>
      {/* floating speed ball, half off the right edge */}
      <div className="absolute top-[177px] right-[-29px] flex h-[46px] w-[46px] items-center rounded-full border-2 border-[#e8f5ea] bg-[radial-gradient(circle,#5fd06c,#35b558_60%,#23934a)] pl-[3px] text-[11px] font-bold text-white shadow-[0_0_4px_#666]">
        64
      </div>
    </div>
  );
}
